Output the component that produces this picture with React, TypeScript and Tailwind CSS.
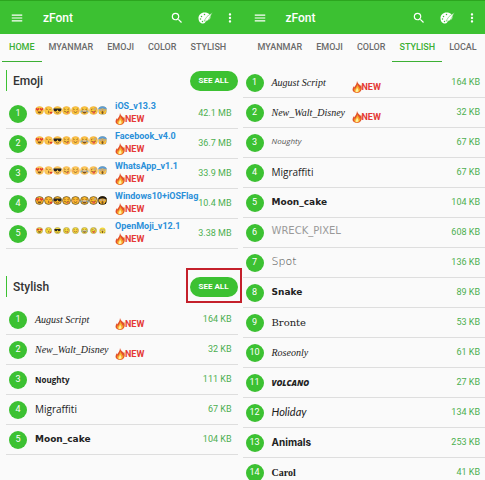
import { MdMenu, MdMoreVert, MdSearch } from 'react-icons/md';

const LEFT_TABS = ['HOME', 'MYANMAR', 'EMOJI', 'COLOR', 'STYLISH'];
const RIGHT_TABS = ['MYANMAR', 'EMOJI', 'COLOR', 'STYLISH', 'LOCAL'];

type FaceStyle = 'ios' | 'facebook' | 'whatsapp' | 'windows' | 'openmoji';

interface Pack {
  name: string;
  size: string;
  faces: FaceStyle;
}

interface Font {
  name: string;
  size: string;
  style: string;
  isNew?: boolean;
}

const EMOJI_PACKS: Pack[] = [
  { name: 'iOS_v13.3', size: '42.1 MB', faces: 'ios' },
  { name: 'Facebook_v4.0', size: '36.7 MB', faces: 'facebook' },
  { name: 'WhatsApp_v1.1', size: '33.9 MB', faces: 'whatsapp' },
  { name: 'Windows10+iOSFlag', size: '10.4 MB', faces: 'windows' },
  { name: 'OpenMoji_v12.1', size: '3.38 MB', faces: 'openmoji' },
];

const SCRIPT = "font-['Liberation_Serif',serif] italic text-[10px]";
const MOON = "font-['DejaVu_Sans',sans-serif] font-bold text-[9px]";
const MIGRAFFITI = "font-['Open_Sans',sans-serif] text-[10px]";

const HOME_FONTS: Font[] = [
  { name: 'August Script', size: '164 KB', style: SCRIPT, isNew: true },
  { name: 'New_Walt_Disney', size: '32 KB', style: SCRIPT, isNew: true },
  { name: 'Noughty', size: '111 KB', style: "font-['Open_Sans',sans-serif] font-bold text-[8px]" },
  { name: 'Migraffiti', size: '67 KB', style: MIGRAFFITI },
  { name: 'Moon_cake', size: '104 KB', style: MOON },
];

const STYLISH_FONTS: Font[] = [
  { name: 'August Script', size: '164 KB', style: SCRIPT, isNew: true },
  { name: 'New_Walt_Disney', size: '32 KB', style: SCRIPT, isNew: true },
  { name: 'Noughty', size: '67 KB', style: "font-['Open_Sans',sans-serif] italic text-[8px] text-[#555] pb-1" },
  { name: 'Migraffiti', size: '67 KB', style: MIGRAFFITI },
  { name: 'Moon_cake', size: '104 KB', style: MOON },
  { name: 'WRECK_PIXEL', size: '608 KB', style: "font-['DejaVu_Sans',sans-serif] text-[10px] text-[#999] pb-1" },
  { name: 'Spot', size: '136 KB', style: "font-['DejaVu_Sans',sans-serif] font-extralight text-[11px] text-[#444]" },
  { name: 'Snake', size: '89 KB', style: "font-['DejaVu_Sans',sans-serif] font-bold text-[9px]" },
  { name: 'Bronte', size: '53 KB', style: "font-['DejaVu_Serif',serif] text-[10px]" },
  { name: 'Roseonly', size: '61 KB', style: "font-['Liberation_Serif',serif] italic text-[10px]" },
  { name: 'VOLCANO', size: '27 KB', style: "font-['Open_Sans',sans-serif] font-extrabold italic text-[8px]" },
  { name: 'Holiday', size: '134 KB', style: "font-['Lato',sans-serif] italic text-[11px]" },
  { name: 'Animals', size: '253 KB', style: "font-['Inter',sans-serif] font-bold text-[10px]" },
  { name: 'Carol', size: '41 KB', style: "font-['Liberation_Serif',serif] font-bold text-[10px]" },
];

const FACE_COLORS: Record<FaceStyle, { fill: string; edge: string; line: number }> = {
  ios: { fill: '#fbc83d', edge: '#e8a23c', line: 1 },
  facebook: { fill: '#fcc545', edge: '#efa53d', line: 1 },
  whatsapp: { fill: '#fdca58', edge: '#f0b05a', line: 1 },
  windows: { fill: '#fcb92b', edge: '#1d1813', line: 1 },
  openmoji: { fill: '#f6dc3b', edge: '#77702f', line: 1 },
};

const EXPRESSIONS = ['love', 'kiss', 'cool', 'yum', 'blush', 'joy', 'wink', 'scream'];

function Face({ kind, faces }: { kind: string; faces: FaceStyle }) {
  const { fill, edge, line } = FACE_COLORS[faces];
  const ink = '#7b5020';
  const scream = kind === 'scream';
  return (
    <svg viewBox="0 0 18 18" className={faces === 'openmoji' ? 'size-[9px] p-px' : 'size-[9px]'}>
      {scream && faces !== 'openmoji' && <rect x="1" y="1" width="16" height="16" rx="6" fill={faces === 'windows' ? '#1d1813' : '#5b9bd9'} />}
      <circle cx="9" cy="9" r="8" fill={fill} stroke={scream && faces !== 'windows' ? 'none' : edge} strokeWidth={line} />
      {kind === 'love' && (
        <>
          <path d="M5 10 1.500 6.500Q1 4 3 4l2 1.500L7 4q2 0 1.500 2.500zM13 10 9.500 6.500Q9 4 11 4l2 1.500L15 4q2 0 1.500 2.500z" fill="#e4372c" />
          <path d="M5 11h8q-.5 4-4 4t-4-4z" fill={ink} />
        </>
      )}
      {kind === 'kiss' && (
        <>
          <path d="M4 7q1.500-2 3 0M11 7h2M8 10q3 0 1 2 2 1-1 2" fill="none" stroke={ink} strokeWidth="1.500" />
          <path d="m14 16-3-3q0-2 3-1 3-1 3 1z" fill="#e4372c" />
        </>
      )}
      {kind === 'cool' && (
        <>
          <path d="M1 5h16q0 6-4 6-3 0-4-4-1 4-4 4-4 0-4-6z" fill="#242321" />
          <path d="M6 13q3 2 6 0" fill="none" stroke={ink} strokeWidth="1.500" />
        </>
      )}
      {kind === 'yum' && (
        <>
          <path d="M4 7q1.500-2 3 0M11 7q1.500-2 3 0M4 10q5 5 10 0" fill="none" stroke={ink} strokeWidth="1.500" />
          <path d="M10 12h3v2q-2 2-3 0z" fill="#e65a55" />
        </>
      )}
      {kind === 'blush' && (
        <>
          <path d="M4 7q1.500-2 3 0M11 7q1.500-2 3 0M5 11q4 4 8 0" fill="none" stroke={ink} strokeWidth="1.500" />
          <circle cx="4" cy="10" r="2" fill="#f5a552" />
          <circle cx="14" cy="10" r="2" fill="#f5a552" />
        </>
      )}
      {kind === 'joy' && (
        <>
          <path d="m4 6 3 1M14 6l-3 1" stroke={ink} strokeWidth="1.500" />
          <path d="M4 9h10q-1 6-5 6t-5-6z" fill={ink} />
          <path d="M5 9h8v2H5z" fill="#fff" />
          <path d="M4 8q-4 3-3 5 3 1 3-5zM14 8q4 3 3 5-3 1-3-5z" fill="#5ba9e0" />
        </>
      )}
      {kind === 'wink' && (
        <>
          <path d="m4 7 3-1M4 10q5 4 10 0" fill="none" stroke={ink} strokeWidth="1.500" />
          <circle cx="12" cy="6" r="2" fill="#fff" stroke={ink} />
          <path d="M7 11h5v3q-2 3-5 0z" fill="#e4534e" />
        </>
      )}
      {scream && (
        <>
          {faces !== 'openmoji' && <path d="M1 7V4q8-7 16 0v3q-8-4-16 0z" fill={faces === 'windows' ? '#1d1813' : '#5b9bd9'} />}
          <circle cx="6" cy="8" r="2" fill="#fff" stroke={ink} />
          <circle cx="12" cy="8" r="2" fill="#fff" stroke={ink} />
          <ellipse cx="9" cy="13" rx="2" ry="3" fill={ink} />
          <path d="M2 11v5h3zM16 11v5h-3z" fill={edge} />
        </>
      )}
    </svg>
  );
}

function Palette() {
  return (
    <svg viewBox="0 0 30 24" className="w-[15px] h-3">
      <path d="M13 1C6 1 1 6 1 12s3 11 9 11c4 0 4-3 7-5 4-2 8-3 8-8 0-6-5-9-12-9z" fill="#fff" />
      <g fill="#3cc132">
        <circle cx="7" cy="9" r="1.500" />
        <circle cx="13" cy="5" r="1.500" />
        <circle cx="5" cy="14" r="1.500" />
        <circle cx="9" cy="19" r="1.500" />
      </g>
      <path d="M29 1 18 9l-6 9q7 2 10-4z" fill="#fff" stroke="#3cc132" strokeWidth="1" />
    </svg>
  );
}

function NewBadge() {
  return (
    <span className="flex items-center text-[9px] leading-3 font-bold text-[#e53935]">
      <svg viewBox="0 0 20 24" className="w-[10px] h-3">
        <path d="M10 0c1 5 6 7 7 10l1-3c3 7 2 16-8 17C0 23-1 16 4 10l1 3c1-4 5-7 5-13z" fill="#e2502a" />
        <path d="M10 5c0 5 6 7 5 11l2-2c0 6-3 9-7 9-6 0-7-5-4-9l1 2c1-4 4-6 3-11z" fill="#f8a928" />
        <path d="M10 12c0 3 4 5 3 8-1 3-6 3-6 0 0-2 3-4 3-8z" fill="#fff0a0" />
      </svg>
      NEW
    </span>
  );
}

function AppBar() {
  return (
    <header className="flex items-center h-[34px] bg-[#3cc132] border-t border-[#2ca51f] text-white pl-[10px] pr-[6px]">
      <button aria-label="Menu"><MdMenu className="size-[14px]" /></button>
      <h1 className="ml-[19px] flex-1 text-[12px] font-medium">zFont</h1>
      <button aria-label="Search" className="mr-[14px]"><MdSearch className="size-[14px]" /></button>
      <button aria-label="Themes" className="mr-[10px]"><Palette /></button>
      <button aria-label="More"><MdMoreVert className="size-[14px]" /></button>
    </header>
  );
}

function Tabs({ tabs, active, className }: { tabs: string[]; active: string; className: string }) {
  return (
    <nav className={`flex h-7 overflow-hidden ${className}`}>
      {tabs.map((t) => (
        <button
          key={t}
          className={`shrink-0 px-[7px] border-b text-[9px] font-medium ${
            t === active ? 'border-[#3cb034] text-[#3cb034]' : 'border-transparent text-[#6b6b6b]'
          }`}
        >
          {t}
        </button>
      ))}
    </nav>
  );
}

function Num({ n }: { n: number }) {
  return (
    <span className="flex items-center justify-center shrink-0 size-[18px] rounded-full bg-[#3cc132] text-white text-[9px]">{n}</span>
  );
}

function FontRow({ font, n, className }: { font: Font; n: number; className: string }) {
  return (
    <li className={`flex items-center h-[30px] border-b border-[#dedede] ${className}`}>
      <Num n={n} />
      <span className="w-20 ml-2 text-[#222] whitespace-nowrap">
        <span className={`block ${font.style}`}>{font.name}</span>
      </span>
      {font.isNew && <span className="pt-2"><NewBadge /></span>}
      <span className="ml-auto text-[9px] text-[#4caf50]">{font.size}</span>
    </li>
  );
}

function SectionHeader({ title }: { title: string }) {
  return (
    <div className="flex items-center justify-between h-[21px] border-l border-[#3cc132] pl-[6px]">
      <h2 className="text-[12px] font-medium text-[#333]">{title}</h2>
      <button className="h-5 w-12 rounded-full bg-[#3cc132] text-white text-[8px] font-bold">SEE ALL</button>
    </div>
  );
}

function HomeScreen() {
  return (
    <section className="min-w-0">
      <AppBar />
      <Tabs tabs={LEFT_TABS} active="HOME" className="pl-[2px]" />
      <div className="pl-[6px] pr-[5px] pt-2">
        <SectionHeader title="Emoji" />
        <ul className="mt-2">
          {EMOJI_PACKS.map((p, i) => (
            <li key={p.name} className="flex items-center h-[30px] border-b border-[#dedede] pl-[3px] pr-[6px]">
              <Num n={i + 1} />
              <span className="flex w-20 ml-2 pb-[6px]">
                {EXPRESSIONS.map((e) => <Face key={e} kind={e} faces={p.faces} />)}
              </span>
              <span className="w-20 pb-1 whitespace-nowrap">
                <a href="#" className="block text-[9px] leading-[14px] font-bold text-[#2b90d9]">{p.name}</a>
                <NewBadge />
              </span>
              <span className="ml-auto whitespace-nowrap text-[9px] text-[#4caf50]">{p.size}</span>
            </li>
          ))}
        </ul>
        <div className="relative mt-[27px]">
          <SectionHeader title="Stylish" />
          <div className="absolute -top-2 -bottom-[6px] -right-1 w-14 border-2 border-[#c4202b] pointer-events-none" />
        </div>
        <ul className="mt-2">
          {HOME_FONTS.map((f, i) => <FontRow key={f.name} font={f} n={i + 1} className="pl-[3px] pr-[6px]" />)}
        </ul>
      </div>
    </section>
  );
}

function StylishScreen() {
  return (
    <section className="min-w-0">
      <AppBar />
      <Tabs tabs={RIGHT_TABS} active="STYLISH" className="pl-2" />
      <ul className="pt-[6px]">
        {STYLISH_FONTS.map((f, i) => <FontRow key={f.name} font={f} n={i + 1} className="pl-[3px] pr-[5px]" />)}
      </ul>
    </section>
  );
}

export default function App() {
  return (
    <main className="grid grid-cols-2 h-screen overflow-hidden bg-[#fafafa] font-['Roboto',sans-serif]">
      <HomeScreen />
      <StylishScreen />
    </main>
  );
}
